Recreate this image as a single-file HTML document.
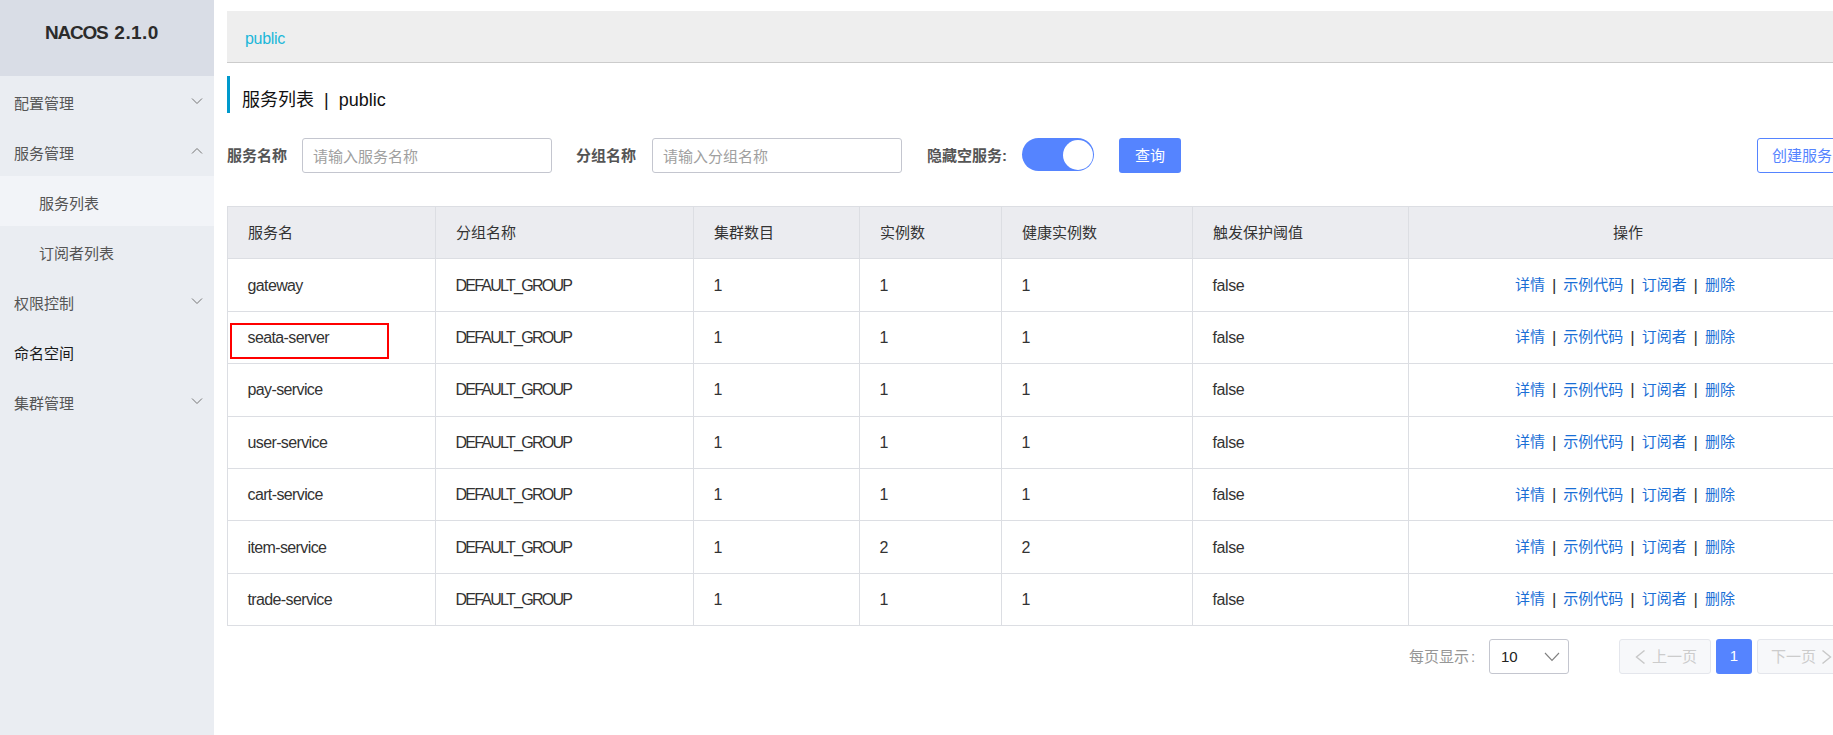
<!DOCTYPE html>
<html lang="zh-CN">
<head>
<meta charset="utf-8">
<title>Nacos</title>
<style>
*{box-sizing:border-box;margin:0;padding:0}
html,body{width:1833px;height:735px;overflow:hidden;background:#fff}
body{font-family:"Liberation Sans","Noto Sans CJK SC",sans-serif;font-size:14px;color:#333;position:relative}
.side{position:absolute;left:0;top:0;width:214px;height:735px;background:#eaedf2}
.side .hd{height:76px;background:#d9dde6;font-weight:bold;font-size:19px;letter-spacing:-0.3px;color:#2b2b2b;line-height:65px;padding-left:45px}
.mi{position:absolute;left:0;width:214px;height:50px;line-height:56px;padding-left:14px;color:#555;font-size:15px}
.mi.sub{padding-left:39px}
.mi.sel{background:#f2f4f8}
.mi svg{position:absolute;left:191px;top:21px}
.main{position:absolute;left:227px;top:0;width:1606px;height:735px}
.ns{position:absolute;left:0;top:11px;width:1606px;height:52px;background:#eee;border-bottom:1px solid #ccc;line-height:55px;padding-left:18px;color:#1bb7d9;font-size:16px;letter-spacing:-0.3px}
.title{position:absolute;left:0;top:76px;height:37px;border-left:3px solid #09c;padding-left:12px;line-height:49px;font-size:18px;color:#111;white-space:nowrap}
.lbl{position:absolute;top:138px;height:34px;line-height:36px;font-weight:bold;font-size:15px;color:#555;white-space:nowrap}
.inp{position:absolute;top:138px;height:35px;width:250px;border:1px solid #c4c6cf;border-radius:3px;line-height:35px;padding-left:10px;color:#a0a0a0;font-size:15px}
.sw{position:absolute;left:795px;top:138px;width:71.5px;height:33px;border-radius:16.5px;background:#5584ff}
.sw i{position:absolute;right:1px;top:1.5px;width:30px;height:30px;border-radius:15px;background:#fff}
.btn{position:absolute;left:892px;top:138px;width:62px;height:35px;border-radius:3px;background:#5584ff;color:#fff;text-align:center;line-height:35px;font-size:15px}
.btn2{position:absolute;left:1530px;top:138px;width:120px;height:35px;border-radius:3px;border:1px solid #5584ff;color:#5584ff;line-height:34px;padding-left:14px;font-size:15px;white-space:nowrap}
table{position:absolute;left:0;top:206px;border-collapse:collapse;width:1700px;table-layout:fixed}
th,td{border:1px solid #dcdee3;height:52.4px;text-align:left;padding:0 20px 2px;font-weight:normal;font-size:15px;color:#333;white-space:nowrap}
td{font-size:16px;padding:1px 20px 0 19.5px}
td.op{font-size:15px}
td.g{letter-spacing:-1.75px}
td.n{letter-spacing:-0.62px}
td.f{letter-spacing:-0.4px}
th{background:#ebecf0}
td.op,th.op{text-align:left;padding:0}
.o{position:relative;top:-1.5px;padding-left:106px}
.o i{display:inline-block;width:18.3px;text-align:center;font-style:normal;color:#333;font-size:17px;line-height:15px;position:relative;top:0.5px}
.oh{position:relative;top:-1px;padding-left:204px}
th span{position:relative;top:0px}
a{color:#1a6fd6;text-decoration:none}
.red{position:absolute;left:3px;top:323.4px;width:159px;height:35.8px;border:2px solid #ff0000}
.pg{position:absolute;top:639px;height:35px;line-height:37px;font-size:15px}
.pl{left:1182px;color:#969696;line-height:36px}
.sel2{left:1262px;width:80px;border:1px solid #c4c6cf;border-radius:3px;padding-left:11px;color:#222;line-height:33px}
.sel2 svg{position:absolute;left:54px;top:12px}
.pb{border:1px solid #e4e6ec;background:#f7f8fa;border-radius:3px;color:#ccc;line-height:33px;white-space:nowrap}
.prev{left:1392px;width:92px;padding-left:32px}
.cur{left:1489px;width:36px;background:#5584ff;color:#fff;border-radius:3px;text-align:center;line-height:34px}
.next{left:1530px;width:100px;padding-left:13px}
.pb svg{position:absolute;top:9.5px}
</style>
</head>
<body>
<div class="side">
  <div class="hd"><span style="letter-spacing:-1.25px">NACOS</span> <span style="letter-spacing:0.45px;margin-left:2px">2.1.0</span></div>
  <div class="mi" style="top:76px">配置管理<svg width="12" height="8" viewBox="0 0 12 8"><path d="M1 1.5 L6 6.5 L11 1.5" fill="none" stroke="#757575" stroke-width="1"/></svg></div>
  <div class="mi" style="top:126px">服务管理<svg width="12" height="8" viewBox="0 0 12 8"><path d="M1 6.5 L6 1.5 L11 6.5" fill="none" stroke="#757575" stroke-width="1"/></svg></div>
  <div class="mi sub sel" style="top:176px">服务列表</div>
  <div class="mi sub" style="top:226px">订阅者列表</div>
  <div class="mi" style="top:276px">权限控制<svg width="12" height="8" viewBox="0 0 12 8"><path d="M1 1.5 L6 6.5 L11 1.5" fill="none" stroke="#757575" stroke-width="1"/></svg></div>
  <div class="mi" style="top:326px;color:#1a1a1a">命名空间</div>
  <div class="mi" style="top:376px">集群管理<svg width="12" height="8" viewBox="0 0 12 8"><path d="M1 1.5 L6 6.5 L11 1.5" fill="none" stroke="#757575" stroke-width="1"/></svg></div>
</div>
<div class="main">
  <div class="ns">public</div>
  <div class="title">服务列表&nbsp; | &nbsp;public</div>
  <div class="lbl" style="left:0">服务名称</div>
  <div class="inp" style="left:75px">请输入服务名称</div>
  <div class="lbl" style="left:349px">分组名称</div>
  <div class="inp" style="left:425px">请输入分组名称</div>
  <div class="lbl" style="left:700px">隐藏空服务:</div>
  <div class="sw"><i></i></div>
  <div class="btn">查询</div>
  <div class="btn2">创建服务</div>
  <table>
    <colgroup><col style="width:208px"><col style="width:258px"><col style="width:166px"><col style="width:142px"><col style="width:191px"><col style="width:216px"><col style="width:519px"></colgroup>
    <tr><th><span>服务名</span></th><th><span>分组名称</span></th><th><span>集群数目</span></th><th><span>实例数</span></th><th><span>健康实例数</span></th><th><span>触发保护阈值</span></th><th class="op"><div class="oh">操作</div></th></tr>
    <tr><td class="n">gateway</td><td class="g">DEFAULT_GROUP</td><td>1</td><td>1</td><td>1</td><td class="f">false</td><td class="op"><div class="o"><a>详情</a><i>|</i><a>示例代码</a><i>|</i><a>订阅者</a><i>|</i><a>删除</a></div></td></tr>
    <tr><td class="n">seata-server</td><td class="g">DEFAULT_GROUP</td><td>1</td><td>1</td><td>1</td><td class="f">false</td><td class="op"><div class="o"><a>详情</a><i>|</i><a>示例代码</a><i>|</i><a>订阅者</a><i>|</i><a>删除</a></div></td></tr>
    <tr><td class="n">pay-service</td><td class="g">DEFAULT_GROUP</td><td>1</td><td>1</td><td>1</td><td class="f">false</td><td class="op"><div class="o"><a>详情</a><i>|</i><a>示例代码</a><i>|</i><a>订阅者</a><i>|</i><a>删除</a></div></td></tr>
    <tr><td class="n">user-service</td><td class="g">DEFAULT_GROUP</td><td>1</td><td>1</td><td>1</td><td class="f">false</td><td class="op"><div class="o"><a>详情</a><i>|</i><a>示例代码</a><i>|</i><a>订阅者</a><i>|</i><a>删除</a></div></td></tr>
    <tr><td class="n">cart-service</td><td class="g">DEFAULT_GROUP</td><td>1</td><td>1</td><td>1</td><td class="f">false</td><td class="op"><div class="o"><a>详情</a><i>|</i><a>示例代码</a><i>|</i><a>订阅者</a><i>|</i><a>删除</a></div></td></tr>
    <tr><td class="n">item-service</td><td class="g">DEFAULT_GROUP</td><td>1</td><td>2</td><td>2</td><td class="f">false</td><td class="op"><div class="o"><a>详情</a><i>|</i><a>示例代码</a><i>|</i><a>订阅者</a><i>|</i><a>删除</a></div></td></tr>
    <tr><td class="n">trade-service</td><td class="g">DEFAULT_GROUP</td><td>1</td><td>1</td><td>1</td><td class="f">false</td><td class="op"><div class="o"><a>详情</a><i>|</i><a>示例代码</a><i>|</i><a>订阅者</a><i>|</i><a>删除</a></div></td></tr>
  </table>
  <div class="red"></div>
  <div class="pg pl">每页显示<span style="margin-left:2px">:</span></div>
  <div class="pg sel2">10<svg width="16" height="10" viewBox="0 0 16 10"><path d="M1 1 L8 8.5 L15 1" fill="none" stroke="#808080" stroke-width="1.1"/></svg></div>
  <div class="pg pb prev"><svg style="left:15px" width="10" height="14" viewBox="0 0 10 14"><path d="M9.5 0.5 L1.5 7 L9.5 13.5" fill="none" stroke="#c8c8c8" stroke-width="1.4"/></svg>上一页</div>
  <div class="pg cur">1</div>
  <div class="pg pb next">下一页<svg style="left:64px" width="10" height="14" viewBox="0 0 10 14"><path d="M0.5 0.5 L8.5 7 L0.5 13.5" fill="none" stroke="#c8c8c8" stroke-width="1.4"/></svg></div>
</div>
</body>
</html>
